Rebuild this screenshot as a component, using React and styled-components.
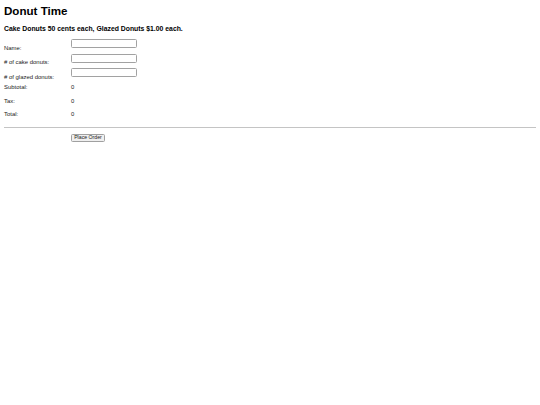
import React from "react";
import styled, { createGlobalStyle } from "styled-components";

const Global = createGlobalStyle`
  html, body { margin: 0; padding: 0; background: #fff; }
  body { font-family: "Liberation Sans", Arial, sans-serif; color: #000; }
`;

const Page = styled.div`
  padding: 4px;
`;

const Title = styled.h1`
  margin: 0;
  font-size: 11.6px;
  line-height: 14px;
  font-weight: bold;
`;

const Subtitle = styled.h4`
  margin: 7.2px 0 0;
  font-size: 6.85px;
  line-height: 8px;
  font-weight: bold;
`;

const Row = styled.div`
  display: grid;
  grid-template-columns: 67px auto;
  align-items: end;
  height: ${(p) => p.$h}px;
`;

const Label = styled.div`
  font-size: 5.95px;
  line-height: 6px;
  margin-bottom: -2.8px;
  white-space: nowrap;
  color: #1a1a1a;
`;

const Value = styled(Label)``;

const Field = styled.input`
  box-sizing: border-box;
  width: 66px;
  height: 8.7px;
  margin: 0;
  padding: 0 2px;
  border: 1px solid #a2a2a2;
  border-radius: 1.5px;
  background: #fff;
  font-size: 5.8px;
  font-family: inherit;
  outline: none;
`;

const Rule = styled.hr`
  margin: 12.3px 0 0;
  border: none;
  border-top: 1px solid #c4c4c4;
  height: 0;
`;

const Actions = styled.div`
  padding-left: 67px;
  margin-top: 6.5px;
`;

const Button = styled.button`
  box-sizing: border-box;
  width: 34px;
  height: 7.7px;
  padding: 0;
  margin: 0;
  font-family: inherit;
  font-size: 5.2px;
  line-height: 5px;
  color: #222;
  background: #efefef;
  border: 1px solid #a0a0a0;
  border-radius: 1.5px;
  display: flex;
  align-items: center;
  justify-content: center;
`;

export default function App() {
  return (
    <>
      <Global />
      <Page>
        <Title>Donut Time</Title>
        <Subtitle>Cake Donuts 50 cents each, Glazed Donuts $1.00 each.</Subtitle>
        <Row $h={14.7}>
          <Label>Name:</Label>
          <Field type="text" />
        </Row>
        <Row $h={14.7}>
          <Label># of cake donuts:</Label>
          <Field type="text" />
        </Row>
        <Row $h={14.6}>
          <Label># of glazed donuts:</Label>
          <Field type="text" />
        </Row>
        <Row $h={10}>
          <Label>Subtotal:</Label>
          <Value>0</Value>
        </Row>
        <Row $h={13.6}>
          <Label>Tax:</Label>
          <Value>0</Value>
        </Row>
        <Row $h={13.6}>
          <Label>Total:</Label>
          <Value>0</Value>
        </Row>
        <Rule />
        <Actions>
          <Button type="button">Place Order</Button>
        </Actions>
      </Page>
    </>
  );
}
